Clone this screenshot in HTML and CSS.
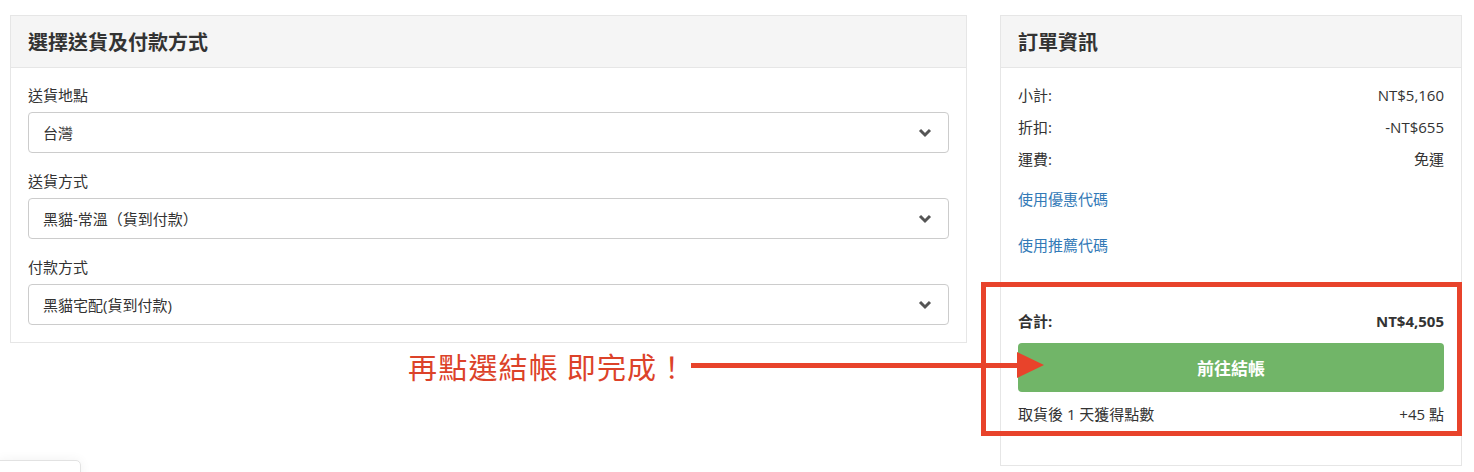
FILE: index.html
```html
<!DOCTYPE html>
<html lang="zh-Hant">
<head>
  <meta charset="UTF-8">
  <meta name="viewport" content="width=device-width, initial-scale=1.0">
  <title>結帳</title>
  <link rel="stylesheet" href="styles.css">
</head>
<body>
  <div class="page">
    <div class="panel panel-main">
      <div class="panel-heading">選擇送貨及付款方式</div>
      <div class="panel-body">
        <div class="form-group">
          <label>送貨地點</label>
          <div class="select">
            <span>台灣</span>
            <svg class="chevron" width="14" height="10" viewBox="0 0 14 10"><polyline points="2,2 7,7 12,2" fill="none" stroke="#555" stroke-width="3"/></svg>
          </div>
        </div>
        <div class="form-group">
          <label>送貨方式</label>
          <div class="select">
            <span>黑貓-常溫（貨到付款）</span>
            <svg class="chevron" width="14" height="10" viewBox="0 0 14 10"><polyline points="2,2 7,7 12,2" fill="none" stroke="#555" stroke-width="3"/></svg>
          </div>
        </div>
        <div class="form-group">
          <label>付款方式</label>
          <div class="select">
            <span>黑貓宅配(貨到付款)</span>
            <svg class="chevron" width="14" height="10" viewBox="0 0 14 10"><polyline points="2,2 7,7 12,2" fill="none" stroke="#555" stroke-width="3"/></svg>
          </div>
        </div>
      </div>
    </div>

    <div class="panel panel-order">
      <div class="panel-heading">訂單資訊</div>
      <div class="panel-body">
        <div class="row"><span>小計:</span><span>NT$5,160</span></div>
        <div class="row"><span>折扣:</span><span>-NT$655</span></div>
        <div class="row"><span>運費:</span><span>免運</span></div>
        <a class="link link-first" href="#">使用優惠代碼</a>
        <a class="link" href="#">使用推薦代碼</a>
        <div class="row total"><span>合計:</span><span>NT$4,505</span></div>
        <button class="btn-checkout">前往結帳</button>
        <div class="row points"><span>取貨後 1 天獲得點數</span><span>+45 點</span></div>
      </div>
    </div>

    <!-- annotation drawn over the screenshot -->
    <div class="callout">
      <span class="callout-text">再點選結帳 即完成！</span>
      <svg width="353" height="26" viewBox="0 0 353 26">
        <rect x="0" y="11" width="330" height="5" fill="#e8432b"/>
        <polygon points="326,0 353,13 326,26" fill="#e8432b"/>
      </svg>
    </div>
    <div class="highlight"></div>
  </div>

  <div class="corner-tab"></div>
</body>
</html>
```

FILE: styles.css
```css
body {
  margin: 0;
  padding: 0;
  background-color: #fff;
  color: #333;
  font-family: "Open Sans", "Noto Sans CJK TC", sans-serif;
  font-size: 15px;
}
.page {
  position: relative;
  display: flex;
  align-items: flex-start;
  gap: 33px;
  padding: 15px 12px 0 10px;
}
.panel {
  border: 1px solid #e6e6e6;
  background-color: #fff;
}
.panel-main {
  flex: 1;
}
.panel-order {
  width: 462px;
  box-sizing: border-box;
}
.panel-heading {
  height: 51px;
  display: flex;
  align-items: center;
  padding: 0 17px;
  background-color: #f5f5f5;
  border-bottom: 1px solid #e6e6e6;
  font-size: 20px;
  font-weight: 600;
  color: #333;
}
.panel-body {
  padding: 16px 17px 17px;
}
.form-group {
  margin-bottom: 17px;
}
.form-group:last-child {
  margin-bottom: 0;
}
label {
  display: block;
  line-height: 22px;
  margin-bottom: 6px;
}
.select {
  height: 41px;
  box-sizing: border-box;
  border: 1px solid #ccc;
  border-radius: 4px;
  display: flex;
  align-items: center;
  justify-content: space-between;
  padding: 0 16px 0 14px;
}
.chevron {
  display: block;
}
.row {
  display: flex;
  justify-content: space-between;
  line-height: 22px;
  margin-bottom: 10px;
}
.link {
  display: block;
  line-height: 21px;
  color: #337ab7;
  text-decoration: none;
  margin-top: 25px;
}
.link-first {
  margin-top: 19px;
}
.total {
  margin-top: 54px;
  margin-bottom: 11px;
  font-weight: 700;
}
.btn-checkout {
  display: block;
  width: 100%;
  height: 49px;
  border: none;
  border-radius: 4px;
  background-color: #71b568;
  color: #fff;
  font-family: inherit;
  font-size: 17px;
  font-weight: 700;
  cursor: pointer;
}
.points {
  margin-top: 11px;
  margin-bottom: 0;
  padding-bottom: 23px;
}
.callout {
  position: absolute;
  left: 408px;
  top: 346px;
  display: flex;
  align-items: center;
  gap: 3px;
}
.callout-text {
  font-family: "Noto Sans CJK TC", sans-serif;
  font-size: 29px;
  font-weight: 400;
  letter-spacing: 1.2px;
  color: #dc4229;
  line-height: 40px;
}
.callout svg {
  display: block;
  margin-top: -3px;
}
.highlight {
  position: absolute;
  left: 981px;
  top: 282px;
  width: 481px;
  height: 154px;
  box-sizing: border-box;
  border: 5px solid #e8432b;
}
.corner-tab {
  position: fixed;
  left: -1px;
  bottom: -20px;
  width: 80px;
  height: 30px;
  background-color: #fff;
  border: 1px solid #e2e2e2;
  border-radius: 0 5px 0 0;
  box-shadow: 0 0 12px rgba(0, 0, 0, 0.06);
}
```
